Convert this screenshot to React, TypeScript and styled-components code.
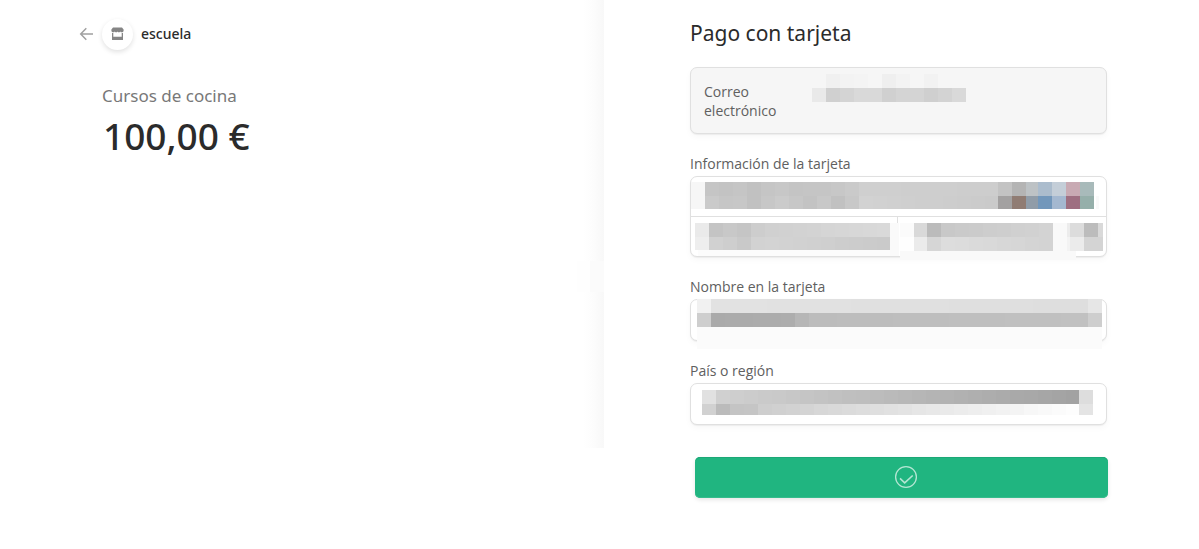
import React from "react";
import styled, { createGlobalStyle } from "styled-components";

const GlobalStyle = createGlobalStyle`
  * { box-sizing: border-box; }
  body {
    margin: 0;
    background: #fff;
    color: #2b2b2b;
    font-family: "Noto Sans", "Open Sans", "Liberation Sans", sans-serif;
  }
`;

const Page = styled.main`
  display: grid;
  grid-template-columns: 604fr 595fr;
  align-items: start;
`;

const Summary = styled.section`
  position: relative;
  min-height: 448px;
  padding: 18px 24px 0 79px;
  background: linear-gradient(to left, #f8f8f8, #fdfdfd 12px, #fff 21px);
`;

const EdgePatch = styled.span`
  position: absolute;
  right: 0;
  top: 261px;
  width: 27px;
  height: 31px;
  background: linear-gradient(to right, #fefefe 13px, #fbfbfb 13px);
`;

const Brand = styled.header`
  display: flex;
  align-items: center;
  height: 32px;
`;

const BackLink = styled.a`
  display: flex;
  width: 23px;
  color: #a0a0a0;
`;

const Avatar = styled.span`
  display: flex;
  align-items: center;
  justify-content: center;
  width: 31px;
  height: 31px;
  border-radius: 50%;
  background: #fff;
  box-shadow: 0 2px 5px rgba(0, 0, 0, 0.12);
`;

const BrandName = styled.span`
  margin-left: 8px;
  font-size: 14px;
  line-height: 20px;
  font-weight: 500;
`;

const Product = styled.p`
  margin: 34px 0 0 23px;
  font-size: 17px;
  line-height: 24px;
  color: #787878;
`;

const Price = styled.p`
  margin: 3px 0 0 24px;
  font-size: 37px;
  line-height: 50px;
  font-weight: 500;
`;

const Payment = styled.form`
  padding: 18px 92px 51px 86px;
`;

const Title = styled.h1`
  margin: 0 0 19px;
  font-size: 21px;
  line-height: 30px;
  font-weight: 400;
`;

const Frame = styled.div<{ $muted?: boolean }>`
  border: 1px solid #e0e0e0;
  border-radius: 7px;
  background: ${(p) => (p.$muted ? "#f6f6f6" : "#fff")};
  box-shadow: 0 1px 1px rgba(0, 0, 0, 0.05), 0 3px 6px rgba(0, 0, 0, 0.03);
`;

const EmailFrame = styled(Frame)`
  display: grid;
  grid-template-columns: 108px 1fr;
  padding: 14px 13px 13px;
`;

const EmailLabel = styled.label`
  width: 80px;
  font-family: "Open Sans", "Noto Sans", sans-serif;
  font-size: 14px;
  line-height: 19px;
  color: #606060;
`;

const Group = styled.div`
  margin-top: 20px;
`;

const Label = styled.label`
  display: block;
  margin-bottom: 2px;
  font-family: "Open Sans", "Noto Sans", sans-serif;
  font-size: 14px;
  line-height: 20px;
  color: #606060;
`;

const Slot = styled.div<{ $divided?: boolean }>`
  position: relative;
  min-width: 0;
  border-right: ${(p) => (p.$divided ? "1px solid #e0e0e0" : "0")};
`;

const CardSplit = styled.div`
  display: grid;
  grid-template-columns: 207fr 208fr;
  border-top: 1px solid #e0e0e0;
`;

const Input = styled.input<{ $height?: number }>`
  display: block;
  width: 100%;
  height: ${(p) => p.$height ?? 39}px;
  padding: 0 12px;
  border: 0;
  outline: 0;
  background: transparent;
  font: inherit;
  font-size: 14px;
`;

const Select = styled.select`
  display: block;
  width: 100%;
  height: 40px;
  padding: 0 12px;
  border: 0;
  outline: 0;
  appearance: none;
  background: transparent;
  font: inherit;
  font-size: 14px;
`;

const Mask = styled.svg<{ $top: number; $left: number; $right: number; $height: number }>`
  position: absolute;
  top: ${(p) => p.$top}px;
  left: ${(p) => p.$left}px;
  width: calc(100% - ${(p) => p.$left + p.$right}px);
  height: ${(p) => p.$height}px;
  pointer-events: none;
`;

const PayButton = styled.button`
  display: flex;
  align-items: center;
  justify-content: center;
  width: calc(100% - 4px);
  height: 41px;
  margin: 32px 0 0 5px;
  padding: 0 0 1px 8px;
  border: 0;
  border-radius: 5px;
  background: #20b580;
  box-shadow: inset 0 1px 0 #1ca876, inset 0 -1px 0 #35bc8c, 0 2px 4px rgba(0, 0, 0, 0.1);
`;

// [x, width, first grey, last grey] or [x, width, colour]
type Run = [number, number, number, number] | [number, number, string];
type Band = { y: number; h: number; runs: Run[] };

const CELL = 14;

const grey = (v: number) => `rgb(${v},${v},${v})`;

const split = (x: number, greys: number[]): Run[] =>
  greys.map((g, i): Run => [x + i * CELL, CELL, g, g]);

function Mosaic(props: {
  bands: Band[];
  width: number;
  height: number;
  top: number;
  left?: number;
  right?: number;
}) {
  const { bands, width, height, top, left = 0, right = 0 } = props;
  return (
    <Mask
      aria-hidden="true"
      viewBox={`0 0 ${width} ${height}`}
      preserveAspectRatio="none"
      shapeRendering="crispEdges"
      $top={top}
      $left={left}
      $right={right}
      $height={height}
    >
      {bands.map((band, b) =>
        band.runs.map((run, r) => {
          const [x, w, from] = run;
          if (typeof from === "string") {
            return <rect key={`${b}-${r}`} x={x} y={band.y} width={w} height={band.h} fill={from} />;
          }
          const to = run[3] as number;
          const count = Math.ceil(w / CELL);
          return Array.from({ length: count }, (_, i) => (
            <rect
              key={`${b}-${r}-${i}`}
              x={x + i * CELL}
              y={band.y}
              width={Math.min(CELL, w - i * CELL)}
              height={band.h}
              fill={grey(Math.round(from + ((to - from) * i) / Math.max(1, count - 1)))}
            />
          ));
        })
      )}
    </Mask>
  );
}

const emailBands: Band[] = [
  { y: 0, h: 14, runs: split(14, [240, 243, 244, 246, 239, 243, 246, 242]) },
  { y: 14, h: 14, runs: split(0, [233, 208, 212, 217, 217, 208, 212, 212, 207, 211, 217]) },
];

const numberBands: Band[] = [
  {
    y: 0,
    h: 14,
    runs: [
      [0, 14, "#f6f6f6"],
      ...split(14, [197, 195, 197, 193, 197, 199, 196, 197, 197, 199, 202]),
      [168, 139, 207, 205],
      [307, 14, "#c3c3c3"],
      [321, 14, "#b4b4b4"],
      [335, 12, "#bdc2c5"],
      [347, 14, "#abbccd"],
      [361, 14, "#c4ced8"],
      [375, 14, "#c8aab3"],
      [389, 14, "#a8baba"],
    ],
  },
  {
    y: 14,
    h: 13,
    runs: [
      [0, 14, "#f6f6f6"],
      ...split(14, [202, 198, 199, 193, 199, 203, 199, 195, 200, 193, 200]),
      [168, 139, 210, 202],
      [307, 14, "#a3a1a1"],
      [321, 14, "#907c73"],
      [335, 12, "#909ca8"],
      [347, 14, "#7297bb"],
      [361, 14, "#a4b8d0"],
      [375, 14, "#9e6f81"],
      [389, 14, "#95afaa"],
      [405, 3, "#f9f9f9"],
    ],
  },
];

const expiryBands: Band[] = [
  {
    y: 0,
    h: 14,
    runs: [[0, 14, 234, 234], ...split(14, [196, 200, 197, 205]), [70, 125, 208, 217], [195, 9, "#fafafa"]],
  },
  {
    y: 14,
    h: 13,
    runs: [[0, 14, 238, 238], ...split(14, [209, 206, 201, 210]), [70, 125, 211, 202], [195, 9, "#fafafa"]],
  },
  { y: 27, h: 6, runs: [[3, 192, "#fcfcfc"], [195, 9, "#fafafa"]] },
];

const cvcBands: Band[] = [
  {
    y: 0,
    h: 14,
    runs: [
      [0, 14, "#fbfbfb"],
      [14, 13, "#d9d9d9"],
      [27, 14, "#bbbbbb"],
      [41, 112, 200, 211],
      [153, 14, "#f9f9f9"],
      [167, 3, "#ececec"],
      [170, 14, "#dcdcdc"],
      [184, 14, "#bcbcbc"],
      [198, 5, "#d9d9d9"],
    ],
  },
  {
    y: 14,
    h: 14,
    runs: [
      [0, 14, "#fefefe"],
      [14, 13, "#ebebeb"],
      [27, 14, "#d6d6d6"],
      [41, 112, 221, 211],
      [153, 14, "#f9f9f9"],
      [167, 3, "#f3f3f3"],
      [170, 14, "#ebebeb"],
      [184, 19, "#d4d4d4"],
    ],
  },
  { y: 28, h: 9, runs: [[0, 176, "#f9f9f9"]] },
];

const nameBands: Band[] = [
  { y: 0, h: 14, runs: [[0, 14, 241, 241], [14, 377, 226, 222], [391, 14, 230, 230]] },
  {
    y: 14,
    h: 14,
    runs: [[0, 14, 206, 206], [14, 84, 170, 173], [98, 14, 182, 182], [112, 279, 188, 193], [391, 14, 206, 206]],
  },
  { y: 28, h: 22, runs: [[0, 405, "#fbfbfb"]] },
];

const countryBands: Band[] = [
  { y: 0, h: 14, runs: [[0, 14, 225, 225], [14, 363, 208, 162], [377, 14, 221, 221]] },
  {
    y: 14,
    h: 11,
    runs: [[0, 14, 209, 209], ...split(14, [187, 196, 197]), [56, 321, 206, 253], [377, 14, 228, 228]],
  },
];

function ArrowIcon() {
  return (
    <svg width="15" height="14" viewBox="0 0 15 14" fill="none" stroke="currentColor" strokeWidth="1.5" aria-hidden="true">
      <path d="M14 7H2M7.3 1.3 1.7 7l5.6 5.7" />
    </svg>
  );
}

function StoreIcon() {
  return (
    <svg width="13" height="14" viewBox="0 0 13 14" fill="#858585" aria-hidden="true">
      <path d="M2 .5h9l1.600 2v1.300c0 .9-.7 1.500-1.600 1.500s-1.500-.4-1.800-.9c-.3.500-.8.9-1.400.9s-1-.4-1.300-.9c-.3.500-.7.9-1.300.9s-1.100-.4-1.400-.9c-.3.500-.9.9-1.800.9S.4 4.700.4 3.800V2.500z" />
      <path d="M1 6h1.300v3.700h8.400V6H12v7H1z" />
    </svg>
  );
}

function CheckIcon() {
  return (
    <svg width="24" height="24" viewBox="0 0 24 24" fill="none" stroke="#b4e6d3" strokeWidth="1.300" aria-hidden="true">
      <circle cx="12" cy="12" r="10.400" />
      <path d="M6 13.300l4.700 4.500 8-7.300" strokeWidth="1.600" />
    </svg>
  );
}

export default function App() {
  return (
    <>
      <GlobalStyle />
      <Page>
        <Summary>
          <EdgePatch />
          <Brand>
            <BackLink href="#" aria-label="Volver">
              <ArrowIcon />
            </BackLink>
            <Avatar>
              <StoreIcon />
            </Avatar>
            <BrandName>escuela</BrandName>
          </Brand>
          <Product>Cursos de cocina</Product>
          <Price>100,00 €</Price>
        </Summary>

        <Payment onSubmit={(e) => e.preventDefault()}>
          <Title>Pago con tarjeta</Title>

          <EmailFrame $muted>
            <EmailLabel htmlFor="email">Correo electrónico</EmailLabel>
            <Slot>
              <Input id="email" type="email" $height={38} />
              <Mosaic bands={emailBands} width={281} height={28} top={-8} />
            </Slot>
          </EmailFrame>

          <Group>
            <Label htmlFor="number">Información de la tarjeta</Label>
            <Frame>
              <Slot>
                <Input id="number" inputMode="numeric" />
                <Mosaic bands={numberBands} width={415} height={27} top={5} />
              </Slot>
              <CardSplit>
                <Slot $divided>
                  <Input aria-label="Caducidad" />
                  <Mosaic bands={expiryBands} width={204} height={33} top={6} left={4} right={-2} />
                </Slot>
                <Slot>
                  <Input aria-label="CVC" />
                  <Mosaic bands={cvcBands} width={203} height={37} top={6} left={2} right={3} />
                </Slot>
              </CardSplit>
            </Frame>
          </Group>

          <Group>
            <Label htmlFor="name">Nombre en la tarjeta</Label>
            <Frame>
              <Slot>
                <Input id="name" $height={40} />
                <Mosaic bands={nameBands} width={405} height={50} top={-1} left={6} right={4} />
              </Slot>
            </Frame>
          </Group>

          <Group>
            <Label htmlFor="country">País o región</Label>
            <Frame>
              <Slot>
                <Select id="country" />
                <Mosaic bands={countryBands} width={391} height={25} top={6} left={11} right={13} />
              </Slot>
            </Frame>
          </Group>

          <PayButton type="submit" aria-label="Pagar">
            <CheckIcon />
          </PayButton>
        </Payment>
      </Page>
    </>
  );
}
